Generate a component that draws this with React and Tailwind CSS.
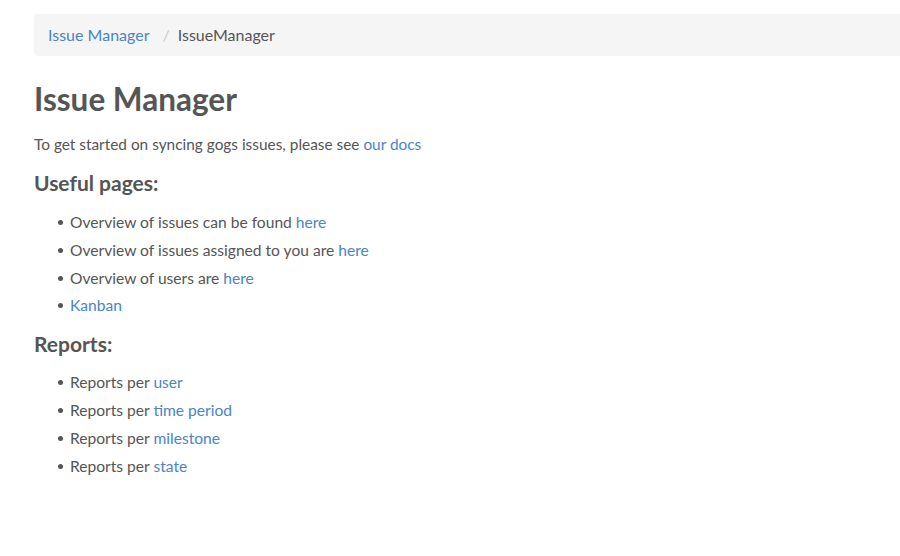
export default function App() {
  const link = "text-[#4a85c2]";
  const Item = ({ children, h }) => (
    <li className={"flex items-center " + (h === 28 ? "h-[28px]" : "h-[27.7px]")}>
      <span className="w-[5px] h-[5px] rounded-full bg-[#555] ml-[24px] mr-[7px] shrink-0" />
      <span>{children}</span>
    </li>
  );
  return (
    <div className="min-h-[556px] bg-white text-[#555] overflow-hidden" style={{ fontFamily: "Lato, 'Liberation Sans', sans-serif" }}>
      <div className="pl-[34px] pt-[14px]">
        <div className="h-[42px] bg-[#f5f5f5] rounded-l-[4px] flex items-center pl-[14px] text-[16px]">
          <span className={link}>Issue Manager</span>
          <span className="text-[#ccc] pl-[13px] pr-[8px]">/</span>
          <span>IssueManager</span>
        </div>
        <h1 className="text-[31.5px] font-bold mt-[25px] leading-[36px]">Issue Manager</h1>
        <p className="text-[15.4px] mt-[17px] leading-[20px]">
          To get started on syncing gogs issues, please see <span className={link}>our docs</span>
        </p>
        <h3 className="text-[21px] font-bold mt-[17px] leading-[24px]">Useful pages:</h3>
        <ul className="text-[15.6px] mt-[14px]">
          <Item>Overview of issues can be found <span className={link}>here</span></Item>
          <Item>Overview of issues assigned to you are <span className={link}>here</span></Item>
          <Item>Overview of users are <span className={link}>here</span></Item>
          <Item><span className={link}>Kanban</span></Item>
        </ul>
        <h3 className="text-[21px] font-bold mt-[12px] leading-[24px]">Reports:</h3>
        <ul className="text-[15.6px] mt-[13px]">
          <Item h={28}>Reports per <span className={link}>user</span></Item>
          <Item h={28}>Reports per <span className={link}>time period</span></Item>
          <Item h={28}>Reports per <span className={link}>milestone</span></Item>
          <Item h={28}>Reports per <span className={link}>state</span></Item>
        </ul>
      </div>
    </div>
  );
}
